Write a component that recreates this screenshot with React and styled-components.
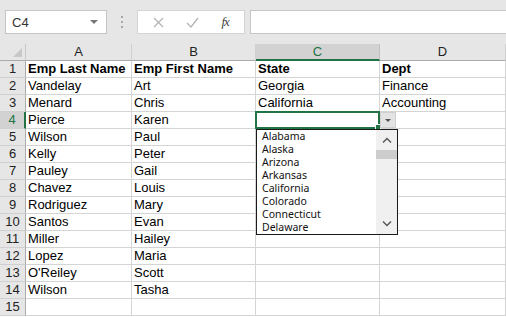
import React from 'react';
import styled, { createGlobalStyle } from 'styled-components';

const GlobalStyle = createGlobalStyle`
  html, body {
    margin: 0;
    padding: 0;
    background: #ffffff;
    overflow: hidden;
  }
  body {
    font-family: "Liberation Sans", Arial, sans-serif;
  }
`;

const Window = styled.div`
  width: 506px;
  height: 317px;
  overflow: hidden;
  background: #ffffff;
`;

const Toolbar = styled.div`
  height: 44px;
  background: #e6e6e6;
  display: flex;
  align-items: flex-start;
  padding: 10px 0 0 5px;
  box-sizing: border-box;
`;

const NameBox = styled.div`
  width: 102px;
  height: 24px;
  background: #fff;
  border: 1px solid #c6c6c6;
  box-sizing: border-box;
  display: flex;
  align-items: center;
  justify-content: space-between;
  padding: 0 6px 0 6px;
  font-size: 13px;
  color: #333;
`;

const Caret = styled.span`
  width: 0;
  height: 0;
  border-left: 4px solid transparent;
  border-right: 4px solid transparent;
  border-top: 4px solid #777;
  margin-right: 2px;
`;

const Dots = styled.div`
  width: 30px;
  height: 24px;
  display: flex;
  flex-direction: column;
  align-items: center;
  justify-content: center;
  gap: 3px;
  span {
    width: 2px;
    height: 2px;
    background: #a8a8a8;
  }
`;

const FormulaButtons = styled.div`
  width: 108px;
  height: 24px;
  background: #fff;
  border: 1px solid #d4d4d4;
  box-sizing: border-box;
  display: flex;
  align-items: center;
  justify-content: space-around;
  padding: 0 4px;
`;

const Fx = styled.span`
  font-family: "Liberation Serif", serif;
  font-style: italic;
  font-size: 13px;
  color: #444;
  letter-spacing: -1px;
`;

const FormulaInput = styled.div`
  flex: 1;
  height: 24px;
  margin-left: 5px;
  background: #fff;
  border: 1px solid #c6c6c6;
  border-right: none;
  box-sizing: border-box;
`;

const Sheet = styled.div`
  display: grid;
  grid-template-columns: 26px 106px 124px 124px 1fr;
  grid-auto-rows: 17px;
  font-size: 13px;
  color: #000;
`;

const Corner = styled.div`
  background: #e6e6e6;
  border-right: 1px solid #c8c8c8;
  border-bottom: 1px solid #ababab;
  box-sizing: border-box;
  position: relative;
  &::after {
    content: '';
    position: absolute;
    right: 3px;
    bottom: 3px;
    border-left: 9px solid transparent;
    border-bottom: 9px solid #c8c8c8;
  }
`;

const ColHead = styled.div`
  background: ${p => (p.$active ? '#d2d2d2' : '#e6e6e6')};
  color: ${p => (p.$active ? '#217346' : '#222')};
  border-right: 1px solid ${p => (p.$active ? '#c0c0c0' : '#d0d0d0')};
  border-bottom: ${p => (p.$active ? '2px solid #217346' : '1px solid #ababab')};
  box-sizing: border-box;
  text-align: center;
  line-height: 16px;
  font-size: 13px;
`;

const RowHead = styled.div`
  background: ${p => (p.$active ? '#d2d2d2' : '#e6e6e6')};
  color: ${p => (p.$active ? '#217346' : '#222')};
  border-right: ${p => (p.$active ? '2px solid #217346' : '1px solid #ababab')};
  border-bottom: 1px solid #d0d0d0;
  box-sizing: border-box;
  text-align: center;
  line-height: 16px;
`;

const Cell = styled.div`
  position: relative;
  border-right: 1px solid #d4d4d4;
  border-bottom: 1px solid #d4d4d4;
  box-sizing: border-box;
  padding-left: 2px;
  line-height: 16px;
  white-space: nowrap;
  font-weight: ${p => (p.$bold ? 700 : 400)};
`;

const Selection = styled.div`
  position: absolute;
  left: -1px;
  top: -1px;
  right: -1px;
  bottom: -1px;
  border: 2px solid #217346;
  z-index: 2;
  &::after {
    content: '';
    position: absolute;
    right: -3px;
    bottom: -3px;
    width: 4px;
    height: 4px;
    background: #217346;
    border: 1px solid #fff;
  }
`;

const DropButton = styled.div`
  position: absolute;
  left: 100%;
  top: 0;
  width: 16px;
  height: 16px;
  background: #e3e3e3;
  border: 1px solid #d0d0d0;
  box-sizing: border-box;
  display: flex;
  align-items: center;
  justify-content: center;
  z-index: 3;
  margin-left: 1px;
`;

const DropCaret = styled.span`
  border-left: 3px solid transparent;
  border-right: 3px solid transparent;
  border-top: 3px solid #555;
`;

const ListBox = styled.div`
  position: absolute;
  left: 0;
  top: 17px;
  width: 142px;
  height: 106px;
  background: #fff;
  border: 1px solid #1a1a1a;
  box-sizing: border-box;
  display: flex;
  z-index: 4;
`;

const Items = styled.div`
  flex: 1;
  font-family: "Noto Sans", "Open Sans", sans-serif;
  font-size: 10.5px;
  color: #111;
`;

const Item = styled.div`
  height: 13px;
  line-height: 13px;
  padding-left: 5px;
`;

const ScrollBar = styled.div`
  width: 21px;
  background: #f0f0f0;
  display: flex;
  flex-direction: column;
  align-items: stretch;
`;

const ScrollArrow = styled.div`
  height: 20px;
  display: flex;
  align-items: center;
  justify-content: center;
`;

const Thumb = styled.div`
  height: 9px;
  background: #cdcdcd;
`;

const Track = styled.div`
  flex: 1;
`;

const rows = [
  ['Emp Last Name', 'Emp First Name', 'State', 'Dept'],
  ['Vandelay', 'Art', 'Georgia', 'Finance'],
  ['Menard', 'Chris', 'California', 'Accounting'],
  ['Pierce', 'Karen', '', ''],
  ['Wilson', 'Paul', '', ''],
  ['Kelly', 'Peter', '', ''],
  ['Pauley', 'Gail', '', ''],
  ['Chavez', 'Louis', '', ''],
  ['Rodriguez', 'Mary', '', ''],
  ['Santos', 'Evan', '', ''],
  ['Miller', 'Hailey', '', ''],
  ['Lopez', 'Maria', '', ''],
  ["O'Reiley", 'Scott', '', ''],
  ['Wilson', 'Tasha', '', ''],
  ['', '', '', ''],
];

const states = ['Alabama', 'Alaska', 'Arizona', 'Arkansas', 'California', 'Colorado', 'Connecticut', 'Delaware'];

const Chevron = ({ up }) => (
  <svg width="10" height="6" viewBox="0 0 10 6">
    <path d={up ? 'M1 5.5 L5 1.5 L9 5.5' : 'M1 0.5 L5 4.5 L9 0.5'} fill="none" stroke="#555" strokeWidth="1.4" />
  </svg>
);

const Dropdown = () => (
  <>
    <Selection />
    <DropButton><DropCaret /></DropButton>
    <ListBox>
      <Items>
        {states.map(s => <Item key={s}>{s}</Item>)}
      </Items>
      <ScrollBar>
        <ScrollArrow><Chevron up /></ScrollArrow>
        <Thumb />
        <Track />
        <ScrollArrow><Chevron /></ScrollArrow>
      </ScrollBar>
    </ListBox>
  </>
);

const App = () => {
  return (
    <Window>
      <GlobalStyle />
      <Toolbar>
        <NameBox>C4<Caret /></NameBox>
        <Dots><span /><span /><span /></Dots>
        <FormulaButtons>
          <svg width="11" height="11" viewBox="0 0 11 11">
            <path d="M1 1 L10 10 M10 1 L1 10" stroke="#b4b4b4" strokeWidth="1.3" />
          </svg>
          <svg width="13" height="11" viewBox="0 0 13 11">
            <path d="M1 6 L5 10 L12 1" fill="none" stroke="#b4b4b4" strokeWidth="1.3" />
          </svg>
          <Fx>fx</Fx>
        </FormulaButtons>
        <FormulaInput />
      </Toolbar>
      <Sheet>
        <Corner />
        {['A', 'B', 'C', 'D'].map(c => (
          <ColHead key={c} $active={c === 'C'}>{c}</ColHead>
        ))}
        {rows.map((r, ri) => (
          <React.Fragment key={ri}>
            <RowHead $active={ri === 3}>{ri + 1}</RowHead>
            {r.map((v, ci) => (
              <Cell key={ci} $bold={ri === 0}>
                {v}
                {ri === 3 && ci === 2 && <Dropdown />}
              </Cell>
            ))}
          </React.Fragment>
        ))}
      </Sheet>
    </Window>
  );
};

export default App;
